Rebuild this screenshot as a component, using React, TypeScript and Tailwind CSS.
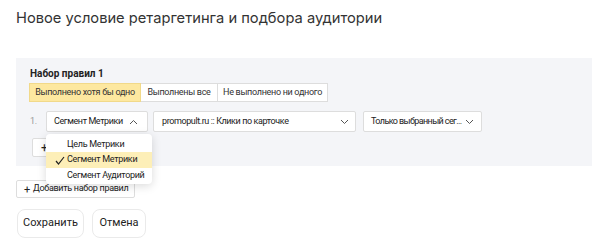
import React from "react";

const Chevron = ({ up = false }: { up?: boolean }) => (
  <svg width="9" height="6" viewBox="0 0 9 6" className="shrink-0">
    <path d={up ? "M1 5 L4.5 1.5 L8 5" : "M1 1 L4.5 4.5 L8 1"} fill="none" stroke="#555" strokeWidth="1" />
  </svg>
);

export default function App() {
  return (
    <div className="w-[600px] h-[248px] bg-white relative overflow-hidden whitespace-nowrap" style={{ fontFamily: "Roboto, sans-serif" }}>
      <div className="pl-4 pt-[8px] h-[58px] text-[14.7px] leading-[20px] text-[#333]" style={{ fontFamily: "Inter, sans-serif" }}>
        Новое условие ретаргетинга и подбора аудитории
      </div>
      <div className="mx-4 w-[576px] h-[108px] bg-[#f4f5f8] pl-[13px] pt-[9px]">
        <div className="text-[10px] leading-[13px] font-bold text-[#222] pl-[1px]">Набор правил 1</div>
        <div className="flex mt-[3px] h-[19px] text-[9px] tracking-[-0.3px] text-[#333]">
          <div className="w-[112px] flex items-center justify-center bg-[#fde8a0] border border-[#f1d98a]">Выполнено хотя бы одно</div>
          <div className="w-[77px] flex items-center justify-center bg-white border-y border-r border-[#ddd]">Выполнены все</div>
          <div className="w-[110px] flex items-center justify-center bg-white border-y border-r border-[#ddd]">Не выполнено ни одного</div>
        </div>
        <div className="flex items-center mt-[9px] h-[21px] text-[9px] tracking-[-0.4px] text-[#222]">
          <div className="w-[17px] pl-[1px] text-[#999]">1.</div>
          <div className="w-[102px] h-[21px] bg-white border border-[#ddd] rounded-[2px] flex items-center justify-between pl-[7px] pr-[9px]">
            <span>Сегмент Метрики</span>
            <Chevron up />
          </div>
          <div className="ml-[5px] w-[203px] h-[21px] bg-white border border-[#ddd] rounded-[2px] flex items-center justify-between pl-[8px] pr-[6px]">
            <span>promopult.ru :: Клики по карточке</span>
            <Chevron />
          </div>
          <div className="ml-[7px] w-[119px] h-[21px] bg-white border border-[#ddd] rounded-[2px] flex items-center justify-between pl-[7px] pr-[7px]">
            <span className="tracking-[-0.6px]">Только выбранный сег...</span>
            <Chevron />
          </div>
        </div>
        <div className="mt-[6px] ml-[3px] w-[60px] h-[19px] bg-white border border-[#ddd] rounded-[2px] flex items-center pl-[8px] text-[12px] text-[#222]">+</div>
      </div>
      <div className="mt-[14px] ml-4 w-[119px] h-[18px] bg-white border border-[#ddd] rounded-[2px] flex items-center pl-[7px] text-[9px] tracking-[-0.3px] text-[#222]">
        <span className="mr-[3px] text-[11px] leading-none">+</span>Добавить набор правил
      </div>
      <div className="flex gap-[8px] mt-[11px] ml-[17px] text-[11px] text-[#222]">
        <div className="w-[67px] h-[29px] border border-[#eaeaea] rounded-[8px] flex items-center justify-center">Сохранить</div>
        <div className="w-[54px] h-[29px] border border-[#eaeaea] rounded-[8px] flex items-center justify-center">Отмена</div>
      </div>
      <div className="absolute left-[46px] top-[134px] w-[106px] h-[50px] bg-white rounded-[4px] shadow-[0_2px_10px_rgba(0,0,0,0.15)] pt-[3px] text-[9px] tracking-[-0.3px] text-[#222]">
        <div className="h-[15px] flex items-center pl-[21px]">Цель Метрики</div>
        <div className="h-[16px] flex items-center pl-[9px] bg-[#fdefb8]">
          <svg width="10" height="9" viewBox="0 0 10 9" className="mr-[2px]"><path d="M1 5 L3.5 8 L9 1" fill="none" stroke="#222" strokeWidth="1.2" /></svg>
          Сегмент Метрики
        </div>
        <div className="h-[15px] flex items-center pl-[21px]">Сегмент Аудиторий</div>
      </div>
    </div>
  );
}
